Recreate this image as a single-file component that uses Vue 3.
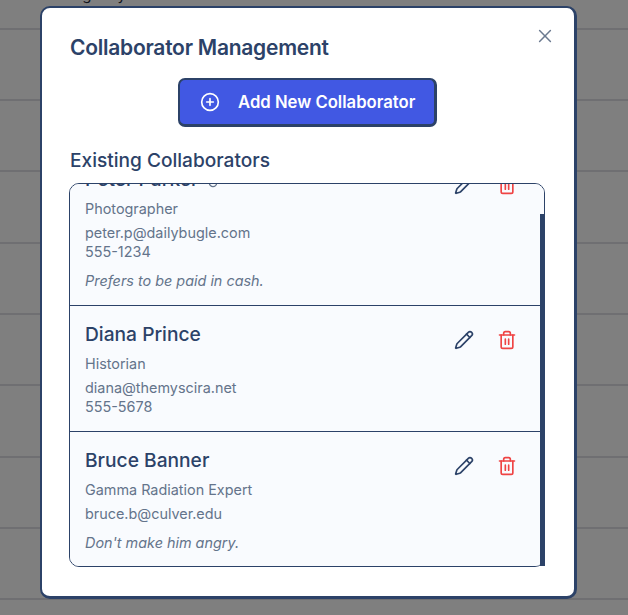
<script setup>
import { ref, onMounted } from 'vue'

const list = ref(null)
const backgroundRows = Array.from({ length: 9 }, (_, i) => i)
const collaborators = [
  { name: 'Peter Parker', badge: true, role: 'Photographer', email: 'peter.p@dailybugle.com', phone: '555-1234', note: 'Prefers to be paid in cash.' },
  { name: 'Diana Prince', role: 'Historian', email: 'diana@themyscira.net', phone: '555-5678' },
  { name: 'Bruce Banner', role: 'Gamma Radiation Expert', email: 'bruce.b@culver.edu', note: "Don't make him angry." },
]

onMounted(() => {
  list.value.scrollTop = 33
})
</script>

<template>
  <div class="page">
    <div v-for="r in backgroundRows" :key="r" class="bg-row">
      <span v-if="r === 0" class="bg-text">Agency</span>
    </div>
    <div class="overlay">
      <section class="modal">
        <button class="close" aria-label="Close">
          <svg width="20" height="20" viewBox="0 0 24 24" fill="none" stroke="currentColor" stroke-width="1.8" stroke-linecap="round">
            <path d="M5.5 5.5l13 13M18.5 5.5l-13 13" />
          </svg>
        </button>
        <h2 class="title">Collaborator Management</h2>
        <div class="add-wrap">
          <button class="add">
            <svg width="20" height="20" viewBox="0 0 24 24" fill="none" stroke="currentColor" stroke-width="2" stroke-linecap="round">
              <circle cx="12" cy="12" r="10" />
              <path d="M8 12h8M12 8v8" />
            </svg>
            <span>Add New Collaborator</span>
          </button>
        </div>
        <h3 class="subtitle">Existing Collaborators</h3>
        <div class="list-wrap">
          <div ref="list" class="list">
            <article v-for="c in collaborators" :key="c.name" class="row">
              <div class="info">
                <div class="name">
                  {{ c.name }}
                  <svg v-if="c.badge" class="badge" width="12" height="12" viewBox="0 0 12 12" fill="none" stroke="#64748b" stroke-width="1.3">
                    <circle cx="6" cy="6" r="3.6" />
                  </svg>
                </div>
                <div class="role">{{ c.role }}</div>
                <div class="contact">
                  <div>{{ c.email }}</div>
                  <div v-if="c.phone">{{ c.phone }}</div>
                </div>
                <div v-if="c.note" class="note">{{ c.note }}</div>
              </div>
              <div class="actions">
                <button class="icon-btn pencil" aria-label="Edit">
                  <svg width="20" height="20" viewBox="0 0 24 24" fill="none" stroke="currentColor" stroke-width="2" stroke-linecap="round" stroke-linejoin="round">
                    <path d="M21.174 6.812a1 1 0 0 0-3.986-3.987L3.842 16.174a2 2 0 0 0-.5.83l-1.321 4.352a.5.5 0 0 0 .623.622l4.353-1.32a2 2 0 0 0 .83-.497z" />
                    <path d="m15 5 4 4" />
                  </svg>
                </button>
                <button class="icon-btn trash" aria-label="Delete">
                  <svg width="20" height="20" viewBox="0 0 24 24" fill="none" stroke="currentColor" stroke-width="2" stroke-linecap="round" stroke-linejoin="round">
                    <path d="M3 6h18" />
                    <path d="M19 6v14c0 1-1 2-2 2H7c-1 0-2-1-2-2V6" />
                    <path d="M8 6V4c0-1 1-2 2-2h4c1 0 2 1 2 2v2" />
                    <path d="M10 11v6M14 11v6" />
                  </svg>
                </button>
              </div>
            </article>
          </div>
          <div class="thumb"></div>
        </div>
      </section>
    </div>
  </div>
</template>

<style>
html, body { margin: 0; background: #fff; overflow: hidden; }
</style>

<style scoped>
.page {
  position: relative;
  width: 628px;
  height: 615px;
  overflow: hidden;
  font-family: Inter, "Liberation Sans", sans-serif;
  background: #fff;
}
.bg-row {
  height: 71.33px;
  box-sizing: border-box;
  border-bottom: 2px solid #dedee4;
  position: relative;
  top: -41.5px;
  font-size: 15px;
  color: #1f2937;
}
.bg-text {
  position: absolute;
  left: 72px;
  top: 26px;
}
.overlay {
  position: absolute;
  inset: 0;
  background: rgba(0, 0, 0, 0.5);
  display: flex;
  align-items: flex-start;
  padding: 6px 0 0 40px;
}
.modal {
  position: relative;
  box-sizing: border-box;
  width: 537px;
  height: 593px;
  background: #fff;
  border: 2px solid #2c4268;
  border-right-width: 3px;
  border-bottom-width: 3px;
  border-radius: 10px;
  padding: 26px 30px 0 27px;
}
.close {
  position: absolute;
  top: 18px;
  right: 19px;
  padding: 0;
  width: 20px;
  height: 20px;
  border: 0;
  background: none;
  color: #6b7a90;
}
.title {
  margin: 0 0 0 1px;
  font-size: 21px;
  line-height: 28px;
  font-weight: 600;
  color: #2c4268;
  letter-spacing: -0.25px;
}
.add-wrap {
  display: flex;
  justify-content: center;
  margin-top: 16px;
  padding-left: 2px;
}
.add {
  display: flex;
  align-items: center;
  gap: 18px;
  box-sizing: border-box;
  width: 259px;
  height: 49px;
  padding: 0 0 0 20px;
  background: #4158e3;
  color: #fff;
  border: 2px solid #2c4268;
  border-bottom-width: 3px;
  border-right-width: 3px;
  border-radius: 7px;
  font: 600 16.7px Inter, sans-serif;
}
.subtitle {
  margin: 20px 0 0 1px;
  font-size: 19.1px;
  line-height: 26px;
  font-weight: 500;
  color: #2c4268;
}
.list-wrap {
  position: relative;
  margin-top: 10px;
  width: 476px;
  height: 384px;
}
.list {
  box-sizing: border-box;
  width: 100%;
  height: 100%;
  border: 1px solid #2c4268;
  border-radius: 10px;
  background: #f9fbfe;
  overflow-y: auto;
  scrollbar-width: none;
}
.thumb {
  position: absolute;
  left: 471px;
  top: 31px;
  width: 5px;
  height: 352px;
  background: #2c4268;
}
.row {
  display: flex;
  justify-content: space-between;
  align-items: flex-start;
  padding: 15px 15px 15px;
  box-sizing: border-box;
  border-bottom: 1px solid #2c4268;
}
.row:last-child { border-bottom: 0; }
.name {
  font-size: 19.2px;
  line-height: 26px;
  font-weight: 500;
  color: #2c4268;
}
.badge { margin-left: 3px; vertical-align: -3px; }
.role, .contact, .note {
  font-size: 14.4px;
  line-height: 19px;
  color: #64748b;
}
.role { margin-top: 7px; }
.contact { margin-top: 5px; }
.note { margin-top: 10px; font-style: italic; }
.actions {
  display: flex;
  gap: 23px;
  padding-top: 9px;
  padding-right: 12.5px;
}
.icon-btn {
  padding: 0;
  width: 20px;
  height: 20px;
  border: 0;
  background: none;
}
.pencil { color: #2c4268; }
.trash { color: #ef4444; }
</style>
